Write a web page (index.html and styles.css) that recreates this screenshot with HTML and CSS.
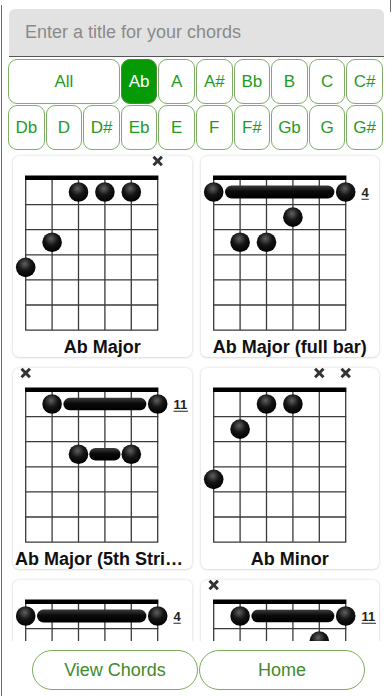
FILE: index.html
```html
<!DOCTYPE html>
<html>
<head>
<meta charset="utf-8">
<title>Chords</title>
<link rel="stylesheet" href="styles.css">
</head>
<body>
<div class="screen">
  <svg class="defs" width="0" height="0" aria-hidden="true">
    <defs>
      <radialGradient id="dotg" cx="45%" cy="32%" r="68%">
        <stop offset="0" stop-color="#606060"/>
        <stop offset="0.5" stop-color="#151515"/>
        <stop offset="1" stop-color="#000"/>
      </radialGradient>
      <linearGradient id="barg" x1="0" y1="0" x2="0" y2="1">
        <stop offset="0" stop-color="#3c3c3c"/>
        <stop offset="0.45" stop-color="#0a0a0a"/>
        <stop offset="1" stop-color="#000"/>
      </linearGradient>
      <symbol id="grid" viewBox="0 0 178 176">
        <g stroke="#3a3a3a" stroke-width="1.3" fill="none">
          <path d="M12.7 23.5V174.1M39.1 23.5V174.1M65.5 23.5V174.1M91.9 23.5V174.1M118.3 23.5V174.1M144.7 23.5V174.1"/>
          <path d="M12.1 48.6H145.3M12.1 73.7H145.3M12.1 98.8H145.3M12.1 123.9H145.3M12.1 149H145.3M12.1 174.1H145.3"/>
        </g>
        <rect x="12" y="19.5" width="133.4" height="4.5" fill="#000"/>
      </symbol>
    </defs>
  </svg>

  <div class="title-field">
    <input class="title-input" type="text" placeholder="Enter a title for your chords">
  </div>

  <div class="keys">
    <button class="key key-all">All</button>
    <button class="key is-active">Ab</button>
    <button class="key">A</button>
    <button class="key">A#</button>
    <button class="key">Bb</button>
    <button class="key">B</button>
    <button class="key">C</button>
    <button class="key">C#</button>
    <button class="key">Db</button>
    <button class="key">D</button>
    <button class="key">D#</button>
    <button class="key">Eb</button>
    <button class="key">E</button>
    <button class="key">F</button>
    <button class="key">F#</button>
    <button class="key">Gb</button>
    <button class="key">G</button>
    <button class="key">G#</button>
  </div>

  <div class="chord-list">
    <div class="chord-grid">

      <div class="card">
        <svg class="diagram" viewBox="0 0 178 176" width="178" height="176">
          <use href="#grid"/>
          <path class="mute" d="M140.5 0.8L148.9 9.2M148.9 0.8L140.5 9.2"/>
          <g fill="url(#dotg)">
            <circle cx="65.5" cy="36.05" r="9.8"/>
            <circle cx="91.9" cy="36.05" r="9.8"/>
            <circle cx="118.3" cy="36.05" r="9.8"/>
            <circle cx="39.1" cy="86.25" r="9.8"/>
            <circle cx="12.7" cy="111.35" r="9.8"/>
          </g>
        </svg>
        <div class="card-label">Ab Major</div>
      </div>

      <div class="card">
        <svg class="diagram" viewBox="0 0 178 176" width="178" height="176">
          <use href="#grid"/>
          <rect x="24" y="29.5" width="109.4" height="13" rx="6.5" fill="url(#barg)"/>
          <g fill="url(#dotg)">
            <circle cx="12.7" cy="36.05" r="9.8"/>
            <circle cx="144.7" cy="36.05" r="9.8"/>
            <circle cx="91.9" cy="61.15" r="9.8"/>
            <circle cx="39.1" cy="86.25" r="9.8"/>
            <circle cx="65.5" cy="86.25" r="9.8"/>
          </g>
          <text class="fret-no" x="160.5" y="41">4</text>
          <path class="fret-line" d="M160.5 43.2H167.8"/>
        </svg>
        <div class="card-label">Ab Major (full bar)</div>
      </div>

      <div class="card">
        <svg class="diagram" viewBox="0 0 178 176" width="178" height="176">
          <use href="#grid"/>
          <path class="mute" d="M8.5 0.8L16.9 9.2M16.9 0.8L8.5 9.2"/>
          <rect x="50.4" y="29.8" width="83" height="12.5" rx="6.25" fill="url(#barg)"/>
          <rect x="76.3" y="80" width="31.2" height="12.5" rx="6.25" fill="url(#barg)"/>
          <g fill="url(#dotg)">
            <circle cx="39.1" cy="36.05" r="9.8"/>
            <circle cx="144.7" cy="36.05" r="9.8"/>
            <circle cx="65.5" cy="86.25" r="9.8"/>
            <circle cx="118.3" cy="86.25" r="9.8"/>
          </g>
          <text class="fret-no" x="160.5" y="41">11</text>
          <path class="fret-line" d="M160.5 43.2H175"/>
        </svg>
        <div class="card-label">Ab Major (5th String)</div>
      </div>

      <div class="card">
        <svg class="diagram" viewBox="0 0 178 176" width="178" height="176">
          <use href="#grid"/>
          <path class="mute" d="M114.1 0.8L122.5 9.2M122.5 0.8L114.1 9.2M140.5 0.8L148.9 9.2M148.9 0.8L140.5 9.2"/>
          <g fill="url(#dotg)">
            <circle cx="65.5" cy="36.05" r="9.8"/>
            <circle cx="91.9" cy="36.05" r="9.8"/>
            <circle cx="39.1" cy="61.15" r="9.8"/>
            <circle cx="12.7" cy="111.35" r="9.8"/>
          </g>
        </svg>
        <div class="card-label">Ab Minor</div>
      </div>

      <div class="card">
        <svg class="diagram" viewBox="0 0 178 176" width="178" height="176">
          <use href="#grid"/>
          <rect x="24" y="29.5" width="109.4" height="13" rx="6.5" fill="url(#barg)"/>
          <g fill="url(#dotg)">
            <circle cx="12.7" cy="36.05" r="9.8"/>
            <circle cx="144.7" cy="36.05" r="9.8"/>
            <circle cx="39.1" cy="86.25" r="9.8"/>
            <circle cx="65.5" cy="86.25" r="9.8"/>
          </g>
          <text class="fret-no" x="160.5" y="41">4</text>
          <path class="fret-line" d="M160.5 43.2H167.8"/>
        </svg>
        <div class="card-label">Ab Minor (full bar)</div>
      </div>

      <div class="card">
        <svg class="diagram" viewBox="0 0 178 176" width="178" height="176">
          <use href="#grid"/>
          <path class="mute" d="M8.5 0.8L16.9 9.2M16.9 0.8L8.5 9.2"/>
          <rect x="50.4" y="29.8" width="83" height="12.5" rx="6.25" fill="url(#barg)"/>
          <g fill="url(#dotg)">
            <circle cx="39.1" cy="36.05" r="9.8"/>
            <circle cx="144.7" cy="36.05" r="9.8"/>
            <circle cx="118.3" cy="61.15" r="9.8"/>
            <circle cx="65.5" cy="86.25" r="9.8"/>
            <circle cx="91.9" cy="86.25" r="9.8"/>
          </g>
          <text class="fret-no" x="160.5" y="41">11</text>
          <path class="fret-line" d="M160.5 43.2H175"/>
        </svg>
        <div class="card-label">Ab Minor (5th String)</div>
      </div>

    </div>
  </div>

  <div class="bottom-bar">
    <button class="pill">View Chords</button>
    <button class="pill">Home</button>
  </div>
</div>
</body>
</html>
```

FILE: styles.css
```css
* {
  box-sizing: border-box;
}

html, body {
  margin: 0;
  padding: 0;
  background: #ffffff;
}

body {
  font-family: "Liberation Sans", Arial, Helvetica, sans-serif;
  color: #111;
}

.screen {
  position: relative;
  width: 392px;
  height: 696px;
  display: flex;
  flex-direction: column;
  overflow: hidden;
  background: #fff;
}

.screen::before {
  content: "";
  position: absolute;
  left: 1px;
  top: 5px;
  bottom: 0;
  width: 1px;
  background: #6a6a6a;
}

.screen::after {
  content: "";
  position: absolute;
  right: 1px;
  top: 0;
  width: 1px;
  height: 12px;
  background: #6a6a6a;
}

.defs {
  display: block;
  width: 0;
  height: 0;
  overflow: hidden;
}

.title-field {
  margin: 9px 8px 0 9px;
  flex: 0 0 auto;
}

.title-input {
  display: block;
  width: 100%;
  height: 48px;
  border: none;
  border-bottom: 1px solid #555;
  border-radius: 6px 6px 0 0;
  background: #e2e2e2;
  padding: 0 16px;
  font-family: "Liberation Sans", Arial, sans-serif;
  font-size: 18px;
  color: #222;
  outline: none;
}

.title-input::placeholder {
  color: #8a8a8a;
}

.keys {
  flex: 0 0 auto;
  margin: 2px 9px 0 8px;
  display: grid;
  grid-template-columns: repeat(10, 1fr);
  grid-auto-rows: 45px;
  gap: 1px 1px;
}

.key {
  margin: 0;
  padding: 0;
  border: 1px solid #80ae69;
  border-radius: 9px;
  background: #fff;
  color: #1f9c1f;
  font-family: "Liberation Sans", Arial, sans-serif;
  font-size: 17px;
  line-height: 1;
}

.key-all {
  grid-column: span 3;
}

.key.is-active {
  background: #069a06;
  border-color: #4d8a3c;
  color: #fff;
}

.chord-list {
  flex: 1 1 auto;
  min-height: 0;
  overflow: hidden;
}

.chord-grid {
  display: grid;
  grid-template-columns: 1fr 1fr;
  column-gap: 9px;
  row-gap: 11px;
  padding: 5.5px 13px 0;
}

.card {
  height: 201px;
  background: #fff;
  border-radius: 6px;
  box-shadow: 0 0 3px rgba(0, 0, 0, 0.16), 0 1px 2px rgba(0, 0, 0, 0.08);
  overflow: hidden;
}

.diagram {
  display: block;
  width: 178px;
  height: 176px;
  overflow: visible;
}

.mute {
  fill: none;
  stroke: #333;
  stroke-width: 3;
}

.fret-no {
  font-family: "Liberation Sans", Arial, sans-serif;
  font-size: 13px;
  font-weight: bold;
  fill: #222;
}

.fret-line {
  stroke: #222;
  stroke-width: 1.1;
}

.card-label {
  padding: 5px 2px 0;
  line-height: 21px;
  font-size: 18px;
  font-weight: bold;
  color: #111;
  text-align: center;
  white-space: nowrap;
  overflow: hidden;
  text-overflow: ellipsis;
}

.bottom-bar {
  flex: 0 0 55px;
  display: flex;
  gap: 1px;
  padding: 9px 0 0 32px;
  background: #fff;
}

.pill {
  width: 166px;
  height: 40px;
  margin: 0;
  padding: 0;
  border: 1px solid #7aab5d;
  border-radius: 20px;
  background: #fff;
  color: #3f8b2c;
  font-family: "Liberation Sans", Arial, sans-serif;
  font-size: 18px;
}
```
